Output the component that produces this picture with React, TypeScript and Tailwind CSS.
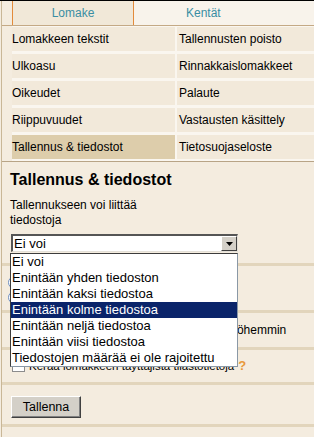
import React from "react";

const leftItems = ["Lomakkeen tekstit", "Ulkoasu", "Oikeudet", "Riippuvuudet", "Tallennus & tiedostot"];
const rightItems = ["Tallennusten poisto", "Rinnakkaislomakkeet", "Palaute", "Vastausten käsittely", "Tietosuojaseloste"];
const options = [
  "Ei voi",
  "Enintään yhden tiedoston",
  "Enintään kaksi tiedostoa",
  "Enintään kolme tiedostoa",
  "Enintään neljä tiedostoa",
  "Enintään viisi tiedostoa",
  "Tiedostojen määrää ei ole rajoitettu",
];

function Band() {
  return <div className="h-[3px] bg-[#e2d5bc]" />;
}

function Checkbox() {
  return <div className="w-[13px] h-[13px] shrink-0 border border-[#8c8c8c] bg-white" />;
}

export default function App() {
  return (
    <div className="relative w-[314px] h-[437px] overflow-hidden bg-[#f4ecdf] font-['Liberation_Sans',Arial,sans-serif] text-black">
      <div className="h-px bg-black" />
      <div className="flex h-[436px]">
        <div className="w-px" />
        <div className="flex-1 flex flex-col border-l border-[#c9b797]">
          {/* tabs */}
          <div className="flex h-[25px] border-b border-[#c4a985]">
            <div className="w-[10px]" />
            <div className="w-[122px] border-x border-[#e38b3b] bg-[#f1e8d8] text-center text-[12px] leading-[24px] text-[#3a8ea3]">
              Lomake
            </div>
            <div className="flex-1 bg-[#f8f3eb] pl-[52px] text-[12px] leading-[24px] text-[#3a8ea3]">Kentät</div>
          </div>
          {/* menu grid */}
          <div className="ml-[10px] grid grid-cols-[163px_1fr] gap-x-[2px] gap-y-[3px] bg-[#faf6ef] pt-px pb-[2px]">
            {leftItems.map((l, i) => (
              <React.Fragment key={l}>
                <div
                  className={
                    "h-[24px] text-[12px] leading-[24px] " +
                    (i === 4 ? "bg-[#ddcdab]" : "bg-[#f2e9da]")
                  }
                >
                  {l}
                </div>
                <div className="h-[24px] bg-[#f2e9da] pl-[2px] text-[12px] leading-[24px]">{rightItems[i]}</div>
              </React.Fragment>
            ))}
          </div>
          <div className="border-t border-[#b8a486]" />
          {/* content */}
          <div className="pl-[8px] mt-[8px] text-[16px] font-bold leading-[20px]">Tallennus &amp; tiedostot</div>
          <div className="pl-[8px] mt-[8px] w-[160px] text-[12px] leading-[15px]">Tallennukseen voi liittää tiedostoja</div>
          <div className="mt-[6px] ml-[9px] mb-[11px] w-[227px] h-[18px] flex bg-white border-t-2 border-l-2 border-[#555555] border-b border-r border-b-[#e4e0d8] border-r-[#e4e0d8]">
            <div className="flex-1 pl-px text-[13px] leading-[15px]">Ei voi</div>
            <div className="w-[16px] h-[15px] flex items-center justify-center bg-[#d4d0c8] border-t border-l border-white border-b border-r border-b-[#404040] border-r-[#404040]">
              <svg width="7" height="4" viewBox="0 0 7 4">
                <path d="M0 0H7L3.5 4Z" fill="#000" />
              </svg>
            </div>
          </div>
          <Band />
          <div className="h-[44px]">
            <div className="flex flex-col gap-[2px] pt-[10px] pl-[6px]">
              <div className="w-[13px] h-[13px] rounded-full border border-[#6f8fc0] bg-white" />
              <div className="w-[13px] h-[13px] rounded-full border border-[#6f8fc0] bg-white" />
            </div>
          </div>
          <Band />
          <div className="h-[34px] flex items-start gap-[4px] pl-[10px] pt-[9px]">
            <div className="mt-[2px]">
              <Checkbox />
            </div>
            <div className="text-[12px] leading-[16px]">Vastaaja voi muokata tallennustaan myöhemmin</div>
          </div>
          <Band />
          <div className="h-[32px] flex items-start gap-[4px] pl-[10px] pt-[9px]">
            <Checkbox />
            <div className="-mt-[1px] text-[11.5px] leading-[16px] whitespace-nowrap">
              Kerää lomakkeen täyttäjistä tilastotietoja
              <span className="ml-[4px] text-[13px] font-bold text-[#e8993b]">?</span>
            </div>
          </div>
          <Band />
          <div className="h-[39px] pl-[9px] pt-[9px]">
            <button className="w-[70px] h-[22px] bg-[#d4d0c8] text-[12.5px] leading-[20px] text-black border-t border-l border-white border-b border-r border-b-[#404040] border-r-[#404040] shadow-[inset_-1px_-1px_0_#808080]">
              Tallenna
            </button>
          </div>
          <Band />
        </div>
      </div>
      {/* open dropdown list */}
      <div className="absolute left-[10px] top-[253px] w-[228px] h-[114px] border border-[#3c3c3c] border-r-[#8a98a6] border-b-[#8a98a6] bg-white">
        {options.map((o, i) => (
          <div
            key={o}
            className={
              "h-[16px] pl-px text-[13px] leading-[16px] whitespace-nowrap " +
              (i === 3 ? "bg-[#0a246a] text-white" : "text-black")
            }
          >
            {o}
          </div>
        ))}
      </div>
    </div>
  );
}
